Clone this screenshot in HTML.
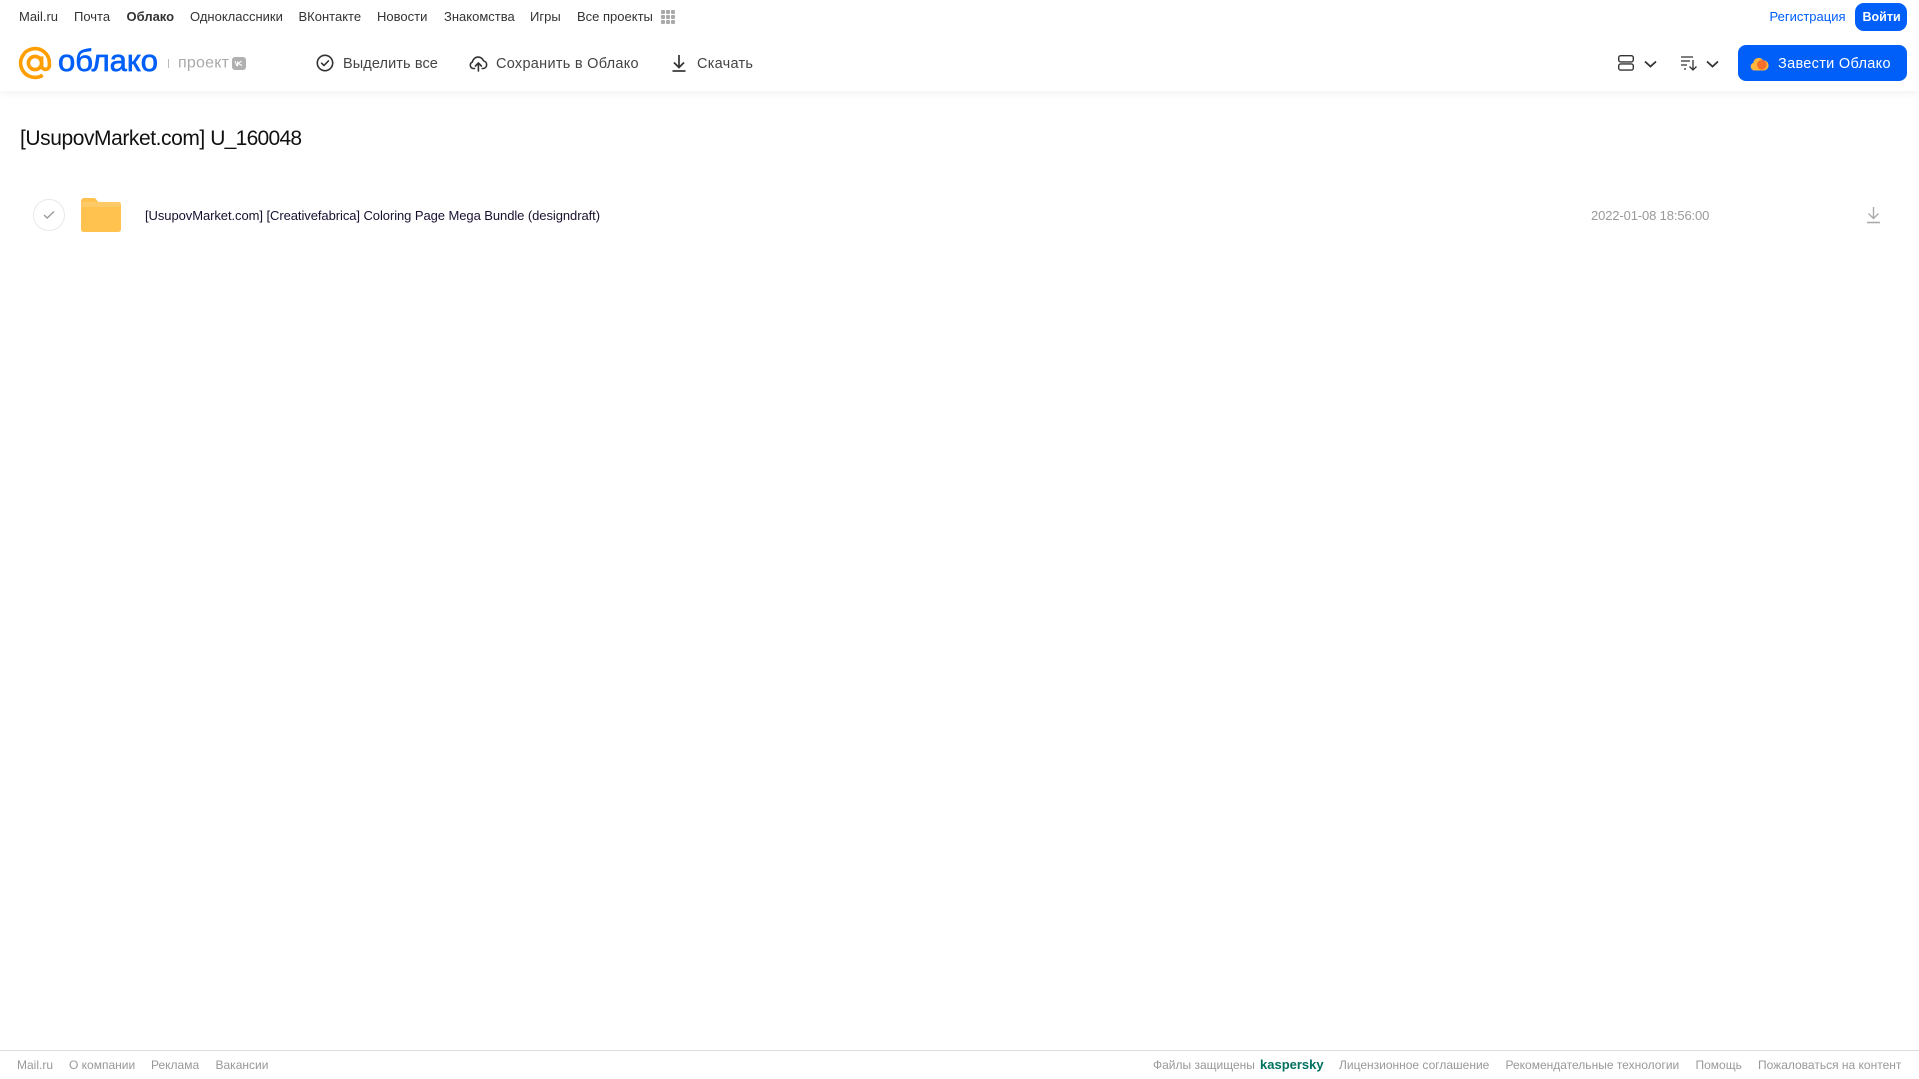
<!DOCTYPE html>
<html lang="ru">
<head>
<meta charset="utf-8">
<title>Облако</title>
<style>
html,body{margin:0;padding:0;background:#fff;width:1919px;height:1079px;overflow:hidden}
body{position:relative;font-family:"Liberation Sans",Arial,sans-serif}
.t{position:absolute;white-space:nowrap;line-height:16px;height:16px}
.n{font-size:13px;top:9px;color:#333}
.b{font-size:14.5px;top:56px;color:#444}
.f{font-size:12px;top:1057px;color:#999}
svg{position:absolute;overflow:visible}
header{position:absolute;left:0;top:0;width:1919px;height:91px;background:#fff;box-shadow:0 2px 8px rgba(0,0,0,.06)}
.btn{position:absolute;background:#005ff9;color:#fff}
</style>
</head>
<body>
<header>
<span class="t n" style="left:19px">Mail.ru</span>
<span class="t n" style="left:74px">Почта</span>
<span class="t n" style="left:126.5px;font-weight:bold">Облако</span>
<span class="t n" style="left:190px">Одноклассники</span>
<span class="t n" style="left:298.5px">ВКонтакте</span>
<span class="t n" style="left:377px">Новости</span>
<span class="t n" style="left:444px">Знакомства</span>
<span class="t n" style="left:530px">Игры</span>
<span class="t n" style="left:577px">Все проекты</span>
<svg style="left:661px;top:10px" width="15" height="15" fill="#aaa"><rect x="0" y="0" width="4" height="4" rx="1"/><rect x="5" y="0" width="4" height="4" rx="1"/><rect x="10" y="0" width="4" height="4" rx="1"/><rect x="0" y="5" width="4" height="4" rx="1"/><rect x="5" y="5" width="4" height="4" rx="1"/><rect x="10" y="5" width="4" height="4" rx="1"/><rect x="0" y="10" width="4" height="4" rx="1"/><rect x="5" y="10" width="4" height="4" rx="1"/><rect x="10" y="10" width="4" height="4" rx="1"/></svg>
<span class="t n" style="left:1769.5px;color:#005ff9">Регистрация</span>
<div class="btn" style="left:1855px;top:3px;width:52px;height:28px;border-radius:9px"></div>
<span class="t n" style="left:1862.5px;color:#fff;font-weight:bold;font-size:12.5px">Войти</span>

<svg style="left:0;top:40px" width="250" height="45">
<g fill="none" stroke="#ff9e00" stroke-width="3.6" transform="translate(0,-40)">
<circle cx="35" cy="63" r="6.6"/>
<path d="M41.6 56.4V65.5a3.9 3.9 0 0 0 7.8 0V63A14.4 14.4 0 1 0 42.7 75.2"/>
</g>
<text x="58" y="31" font-family="Liberation Sans" font-size="31" fill="#005ff9" stroke="#005ff9" stroke-width=".7" textLength="100" lengthAdjust="spacing">облако</text>
<rect x="168" y="19" width="1" height="9" fill="#bbb"/>
<text x="178" y="27.5" font-family="Liberation Sans" font-size="16" fill="#aaa" textLength="51" lengthAdjust="spacing">проект</text>
<rect x="232" y="17" width="14" height="13" rx="3" fill="#b0b0b0"/>
<path d="M235 21.2l1.8 4.4h.8v-4.4M241.6 21.2l-3.4 2.2 3.8 2.2" fill="none" stroke="#fff" stroke-width="1.1"/>
</svg>

<svg style="left:316px;top:54px" width="18" height="18" fill="none" stroke="#333" stroke-width="1.6"><circle cx="9" cy="9" r="7.7"/><path d="M5.6 9.2l2.4 2.3 4.4-4.6" stroke-linecap="round" stroke-linejoin="round"/></svg>
<span class="t b" style="left:343px;letter-spacing:.1px">Выделить все</span>

<svg style="left:469px;top:54px" width="19" height="18" fill="none" stroke="#333" stroke-width="1.6" stroke-linecap="round" stroke-linejoin="round"><path d="M5.5 14.5H4.2A3.4 3.4 0 0 1 3.4 8 5.8 5.8 0 0 1 14.6 6.9 3.9 3.9 0 0 1 14.6 14.5H13.2"/><path d="M9.4 17V9.5M6.4 12l3-3 3 3"/></svg>
<span class="t b" style="left:496px;letter-spacing:.28px">Сохранить в Облако</span>

<svg style="left:671px;top:54px" width="16" height="18" fill="none" stroke="#333" stroke-width="1.7"><path d="M8 1v12M3 8.5l5 5 5-5"/><path d="M1.5 17h13"/></svg>
<span class="t b" style="left:697px;letter-spacing:.26px">Скачать</span>

<svg style="left:1618px;top:55px" width="16" height="16" fill="none" stroke="#333" stroke-width="1.4"><rect x=".7" y=".7" width="14.6" height="6.2" rx="2"/><rect x=".7" y="8.9" width="14.6" height="6.2" rx="2"/></svg>
<svg style="left:1643.5px;top:60px" width="13" height="8" fill="none" stroke="#333" stroke-width="1.8"><path d="M1 1.5l5.5 5 5.5-5"/></svg>
<svg style="left:1681px;top:55px" width="17" height="16" fill="none" stroke="#333" stroke-width="1.3"><path d="M0 2h12M0 6h9M0 10h6M3 14h2"/><path d="M12 5v10M8.5 11.5l3.5 3.5 3.5-3.5"/></svg>
<svg style="left:1705.5px;top:60px" width="13" height="8" fill="none" stroke="#333" stroke-width="1.8"><path d="M1 1.5l5.5 5 5.5-5"/></svg>

<div class="btn" style="left:1738px;top:45px;width:169px;height:36px;border-radius:8px"></div>
<svg style="left:1750px;top:54.5px" width="19" height="16"><path d="M4.5 15.5A4 4 0 0 1 3.4 7.7 5.2 5.2 0 0 1 13 5.4 5 5 0 0 1 14 15.5Z" fill="#ffb63c"/><circle cx="11.8" cy="9.8" r="4.8" fill="#f4702a"/></svg>
<span class="t b" style="left:1778px;color:#fff;letter-spacing:.31px">Завести Облако</span>
</header>

<span class="t" style="left:20px;top:126.5px;height:24px;line-height:24px;font-size:21px;letter-spacing:-.43px;color:#111">[UsupovMarket.com] <span style="letter-spacing:-.72px">U_160048</span></span>

<div style="position:absolute;left:33px;top:199px;width:30px;height:30px;border:1px solid #e9e9e9;border-radius:50%"></div>
<svg style="left:43px;top:210px" width="12" height="10" fill="none" stroke="#999" stroke-width="1.4"><path d="M1 5l3.2 3L11 1.5"/></svg>
<svg style="left:81px;top:198px" width="40" height="34"><path d="M0 3a3 3 0 0 1 3-3h9.5c2 0 2.5 1 3.5 2.5S18 4 20 4h17a3 3 0 0 1 3 3v24a3 3 0 0 1-3 3H3a3 3 0 0 1-3-3Z" fill="#ffc24e"/><rect x="0" y="8" width="40" height="26" rx="3" fill="#ffc24e"/><path d="M0 4h40v5H0z" fill="#fdd07c" opacity=".55"/></svg>
<span class="t" style="left:145px;top:207.5px;font-size:13px;color:#1a1030;letter-spacing:-.07px">[UsupovMarket.com] [Creativefabrica] Coloring Page Mega Bundle (designdraft)</span>
<span class="t" style="left:1591px;top:207.5px;font-size:13px;color:#999;letter-spacing:-.13px">2022-01-08 18:56:00</span>
<svg style="left:1866px;top:206px" width="15" height="18" fill="none" stroke="#aaa" stroke-width="1.4"><path d="M7.5 1v11M2.5 7.5l5 5 5-5"/><path d="M1 16.5h13" stroke-width="1.6"/></svg>

<div style="position:absolute;left:0;top:1050px;width:1919px;height:1px;background:#ddd"></div>
<span class="t f" style="left:17px">Mail.ru</span>
<span class="t f" style="left:69px">О компании</span>
<span class="t f" style="left:151px">Реклама</span>
<span class="t f" style="left:215.5px">Вакансии</span>
<span class="t f" style="left:1153px">Файлы защищены</span>
<span class="t f" style="left:1260px;color:#00715f;font-weight:bold;font-size:13px">kaspersky</span>
<span class="t f" style="left:1339px">Лицензионное соглашение</span>
<span class="t f" style="left:1505.5px">Рекомендательные технологии</span>
<span class="t f" style="left:1695.5px">Помощь</span>
<span class="t f" style="left:1758px">Пожаловаться на контент</span>
</body>
</html>
